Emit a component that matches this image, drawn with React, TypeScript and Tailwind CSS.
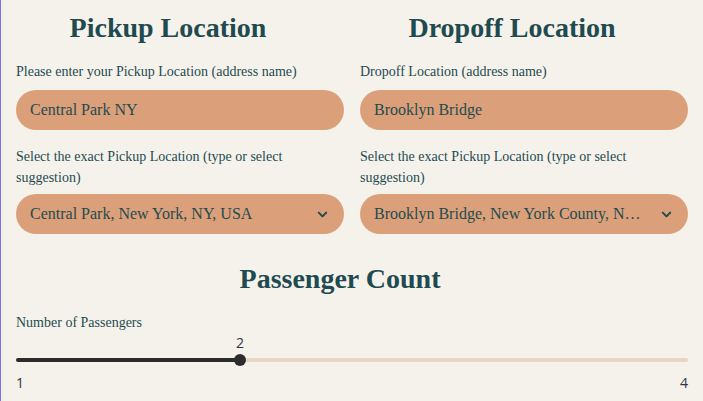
import React from 'react';
import { ChevronDown } from 'lucide-react';

const serif = { fontFamily: '"Liberation Serif", "Times New Roman", serif' };

interface LocationColumnProps {
    title: string;
    inputLabel: string;
    inputValue: string;
    selectLabel: string;
    selectValue: string;
}

const LocationColumn: React.FC<LocationColumnProps> = ({ title, inputLabel, inputValue, selectLabel, selectValue }) => {
    return (
        <div className="flex flex-col min-w-0">
            <h2 className="text-[28px] leading-[36px] font-bold text-center pr-6 text-[#1f4b50] mt-[10px]">{title}</h2>
            <label className="text-[14px] leading-[20px] mt-4 text-[#1f4b50]">{inputLabel}</label>
            <div className="mt-2 h-10 rounded-full bg-[#dba07a] flex items-center px-3.5 text-[16px] text-[#1f4b50]">
                {inputValue}
            </div>
            <label className="text-[14px] leading-[21px] mt-4 text-[#1f4b50]">{selectLabel}</label>
            <div className="mt-1.5 h-10 rounded-full bg-[#dba07a] flex items-center pl-3.5 pr-3.5 text-[16px] text-[#1f4b50]">
                <span className="flex-1 truncate">{selectValue}</span>
                <ChevronDown size={15} strokeWidth={3.2} className="ml-3.5 shrink-0 text-[#1f4b50]" />
            </div>
        </div>
    );
};

const PassengerSlider: React.FC<{ value: number; min: number; max: number }> = ({ value, min, max }) => {
    const pct = ((value - min) / (max - min)) * 100;
    return (
        <div className="flex flex-col">
            <div className="relative h-[18px] mt-px">
                <span
                    className="absolute top-0 -translate-x-1/2 text-[14px] leading-[18px] text-[#31333f]"
                    style={{ left: `${pct}%`, fontFamily: '"Open Sans", "Noto Sans", sans-serif' }}
                >
                    {value}
                </span>
            </div>
            <div className="relative h-4 flex items-center">
                <div className="w-full h-1 rounded-full bg-[#e9d6c7]" />
                <div className="absolute left-0 h-1 rounded-full bg-[#2d2d2d]" style={{ width: `${pct}%` }} />
                <div
                    className="absolute w-3 h-3 rounded-full bg-[#2d2d2d] -translate-x-1/2"
                    style={{ left: `${pct}%` }}
                />
            </div>
            <div
                className="flex justify-between mt-1.5 text-[14px] leading-[18px] text-[#31333f]"
                style={{ fontFamily: '"Open Sans", "Noto Sans", sans-serif' }}
            >
                <span>{min}</span>
                <span>{max}</span>
            </div>
        </div>
    );
};

export default function App() {
    return (
        <div className="w-[703px] h-[401px] overflow-hidden bg-[#f5f2ec] border-l border-[#7b72ee] px-[15px]" style={serif}>
            <div className="grid grid-cols-2 gap-4">
                <LocationColumn
                    title="Pickup Location"
                    inputLabel="Please enter your Pickup Location (address name)"
                    inputValue="Central Park NY"
                    selectLabel="Select the exact Pickup Location (type or select suggestion)"
                    selectValue="Central Park, New York, NY, USA"
                />
                <LocationColumn
                    title="Dropoff Location"
                    inputLabel="Dropoff Location (address name)"
                    inputValue="Brooklyn Bridge"
                    selectLabel="Select the exact Pickup Location (type or select suggestion)"
                    selectValue="Brooklyn Bridge, New York County, New York, NY, USA"
                />
            </div>
            <h2 className="text-[28px] leading-[36px] font-bold text-center pr-6 text-[#1f4b50] mt-[27px]">Passenger Count</h2>
            <div className="text-[14px] leading-[20px] mt-4 text-[#1f4b50]">Number of Passengers</div>
            <PassengerSlider value={2} min={1} max={4} />
        </div>
    );
}
